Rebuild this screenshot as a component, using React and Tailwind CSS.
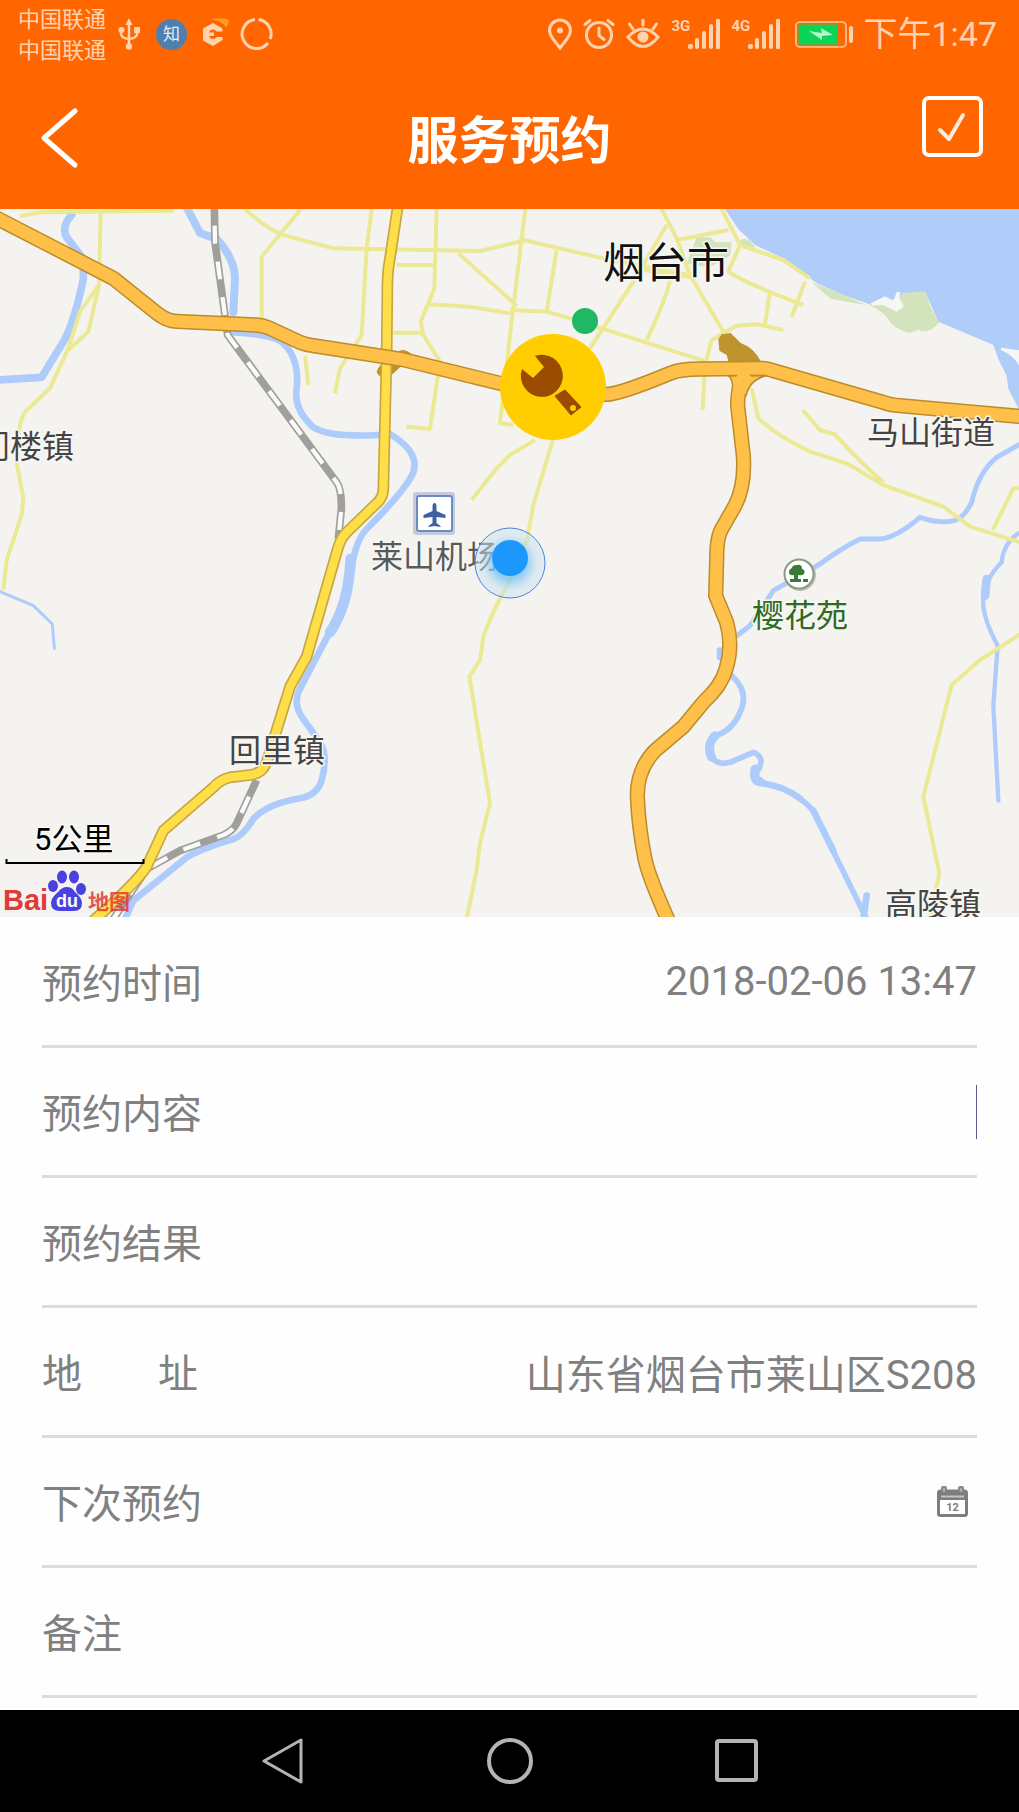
import React from "react";

const TINT = "#ffd2b0";

/* ---------- status bar ---------- */

function UsbIcon() {
  return (
    <svg width="26" height="32" viewBox="0 0 26 32" fill="none" stroke={TINT} strokeWidth="2.500" aria-hidden="true">
      <path d="M11 7v21M3 12v4q0 4 8 5M19 12v4q0 4-8 5" />
      <path d="M11 0l3.500 7h-7z" fill={TINT} stroke="none" />
      <circle cx="3.500" cy="12" r="3" fill={TINT} stroke="none" />
      <rect x="16" y="9" width="6" height="6" fill={TINT} stroke="none" />
      <circle cx="11" cy="28.500" r="3.200" fill={TINT} stroke="none" />
    </svg>
  );
}

function HexIcon() {
  return (
    <svg className="overflow-visible" width="29" height="32" viewBox="0 0 29 32" aria-hidden="true">
      <path d="M12 1q14-2 18 1.500q0 4-3 7q-3-6-15-8.500z" fill="#f9a01b" />
      <path d="M14 5l9.500 5.500v3h-6q-1-2-3.500-2q-3 0-4 3h5v3.500h-5q1 3 4 3q2.500 0 3.500-2h6v3L14 28l-10-5.500v-12z" fill={TINT} />
    </svg>
  );
}

function RingIcon() {
  return (
    <svg width="33" height="34" viewBox="0 0 33 34" fill="none" stroke={TINT} strokeWidth="3" aria-hidden="true">
      <path d="M18.500 2.600A14.500 14.500 0 0 1 30.200 22" />
      <path d="M28 26A14.500 14.500 0 1 1 15 2.600" />
    </svg>
  );
}

function PinIcon() {
  return (
    <svg width="26" height="32" viewBox="0 0 26 32" aria-hidden="true">
      <path d="M13 30C9 24 2.500 19 2.500 12.500a10.500 10.500 0 0 1 21 0C23.500 19 17 24 13 30z" fill="none" stroke={TINT} strokeWidth="3" />
      <circle cx="13" cy="12.500" r="3" fill={TINT} />
    </svg>
  );
}

function AlarmIcon() {
  return (
    <svg width="32" height="32" viewBox="0 0 32 32" fill="none" stroke={TINT} strokeWidth="3" strokeLinecap="round" aria-hidden="true">
      <circle cx="16" cy="17" r="12.500" />
      <path d="M16 10v7.500l5 4M2 6.500l5-4M30 6.500l-5-4" />
    </svg>
  );
}

function EyeIcon() {
  return (
    <svg width="36" height="32" viewBox="0 0 36 32" fill="none" stroke={TINT} strokeWidth="3" strokeLinecap="round" aria-hidden="true">
      <path d="M3 19Q18 3 33 19Q18 38 3 19z" />
      <circle cx="18" cy="19" r="5.500" fill={TINT} stroke="none" />
      <path d="M18 2v5M4.500 6l3.500 5M31.500 6l-3.500 5" />
    </svg>
  );
}

function Signal({ label }) {
  return (
    <div className="flex h-8 w-[50px] items-start">
      <span className="w-[17px] text-[15px] leading-4 font-bold">{label}</span>
      <svg width="33" height="32" viewBox="0 0 33 32" fill={TINT} aria-hidden="true">
        <rect x="0" y="26" width="5" height="5" rx="2" />
        <rect x="7" y="20" width="4" height="11" rx="2" />
        <rect x="14" y="13" width="4" height="18" rx="2" />
        <rect x="21" y="6" width="4" height="25" rx="2" />
        <rect x="28" y="1" width="4" height="30" rx="1" />
      </svg>
    </div>
  );
}

function BatteryIcon() {
  return (
    <svg width="62" height="32" viewBox="2 0 62 32" aria-hidden="true">
      <rect x="7" y="4" width="50" height="25" rx="4" fill="none" stroke="#ffb27d" strokeWidth="2" />
      <rect x="9.500" y="6.500" width="39" height="20" fill="#0ad556" />
      <path d="M20 13l13 2-1-5 12 7-11 1 0 4z" fill="#b6f5c9" />
      <rect x="60" y="8" width="4" height="17" rx="2" fill={TINT} />
    </svg>
  );
}

function StatusBar() {
  return (
    <div className="flex h-[68px] items-center justify-between pr-[22px] pl-[18px] text-[#ffd2b0]">
      <div className="flex items-center gap-3">
        <div className="pt-[2px] text-[22px] leading-[31px]">
          <p>中国联通</p>
          <p>中国联通</p>
        </div>
        <UsbIcon />
        <span className="flex size-[31px] items-center justify-center rounded-full bg-[#4f7fae] text-[17px] leading-none text-[#e4edf5]">知</span>
        <HexIcon />
        <RingIcon />
      </div>
      <div className="flex items-center gap-[10px]">
        <PinIcon />
        <AlarmIcon />
        <EyeIcon />
        <Signal label="3G" />
        <Signal label="4G" />
        <BatteryIcon />
        <time className="text-[34px] leading-none">下午1:47</time>
      </div>
    </div>
  );
}

function TitleBar() {
  return (
    <div className="grid h-[141px] grid-cols-[1fr_auto_1fr] items-center px-9">
      <button type="button" aria-label="返回" className="justify-self-start">
        <svg width="48" height="64" viewBox="0 0 48 64" fill="none" stroke="#fff" strokeWidth="5" strokeLinecap="round" strokeLinejoin="round" aria-hidden="true">
          <path d="M39 4L8 31L39 58" />
        </svg>
      </button>
      <h1 className="pt-1.5 text-[51px] leading-none font-bold">服务预约</h1>
      <button type="button" aria-label="提交" className="mt-7 self-start justify-self-end">
        <svg width="61" height="61" viewBox="0 0 61 61" fill="none" stroke="#fff" strokeLinecap="round" strokeLinejoin="round" aria-hidden="true">
          <rect x="2" y="2" width="57" height="57" rx="5" strokeWidth="4" />
          <path d="M18 34L27 43L41 19" strokeWidth="4" stroke="#ffeadb" />
        </svg>
      </button>
    </div>
  );
}

/* ---------- map ---------- */

const RIVERS = [
  ["M215 18Q185 50 198 82Q215 105 250 150L250 210Q225 330 195 390L125 505L-10 513", 23],
  ["M560 -5L600 72L650 90Q705 150 705 210L700 310", 24],
  ["M700 370Q800 375 840 395Q900 440 890 540Q880 600 940 655Q1000 690 1170 675Q1260 730 1240 790Q1220 840 1100 960Q1060 1000 1050 1120Q1045 1190 1000 1250Q930 1380 895 1450Q880 1490 910 1530L960 1600Q985 1640 965 1715Q950 1760 900 1768Q800 1785 760 1830Q730 1880 700 1890Q600 1920 560 1945L400 2075L375 2130", 20],
  ["M1052 1050Q1045 1190 990 1270", 32],
  ["M0 1148L100 1190L157 1245L163 1318", 9],
  ["M3060 705L2990 745Q2935 790 2915 880Q2890 930 2860 935Q2820 945 2760 925Q2690 985 2640 990L2580 990Q2520 1020 2460 1065L2320 1145L2250 1250L2205 1285", 15],
  ["M2160 1325L2160 1345", 20],
  ["M2195 1400Q2250 1450 2220 1510Q2200 1560 2150 1580Q2120 1610 2135 1645Q2155 1670 2190 1660L2260 1630Q2300 1645 2270 1690Q2260 1720 2340 1735Q2400 1760 2440 1805L2600 2130", 17],
  ["M2145 1580Q2118 1610 2135 1645M2265 1680Q2258 1715 2280 1718", 27],
  ["M2280 1722Q2350 1730 2400 1768M2440 1805L2500 1925M2600 2060L2590 2130", 20],
  ["M3060 970Q3010 1000 3005 1060Q2955 1110 2950 1170Q2945 1220 2993 1310L2980 1490L2995 1775", 13],
  ["M2960 1110L2955 1160", 26],
];

const MINOR_ROADS = [
  "M60 22L120 10L520 5",
  "M302 10L297 228L265 368L205 423",
  "M297 228L240 308L205 418L150 538L75 608Q50 650 50 760L70 868L65 918L20 1053L10 1143",
  "M735 0Q800 60 850 78L1000 118L1440 126L1550 100L1570 93L1810 148L2090 203",
  "M900 3L785 143V335",
  "M1115 0L1100 118L1085 378L1020 478L1005 553",
  "M1310 0L1303 238L1262 338L1270 378L1320 458L1290 660L1220 653",
  "M1190 168H1300M1180 371H1265",
  "M1285 286L1410 293L1530 313M1530 303L1640 308L1710 328L2120 458",
  "M1375 133L1550 290",
  "M915 440L925 528",
  "M1576 0L1565 88L1530 378L1500 643L1540 648",
  "M1605 693L1530 738L1490 778L1415 873",
  "M1670 123L1640 308",
  "M1985 0L2030 88L2070 198L2170 368",
  "M2000 48L1900 218L1770 418",
  "M2012 195Q2012 240 1940 393",
  "M2030 93L2185 63M1930 183L2085 206",
  "M2165 0L2220 108L2350 153L2430 208",
  "M2220 108L2185 188Q2240 225 2410 288",
  "M2415 218L2375 323M2310 243L2295 348",
  "M2350 363L2270 346L2210 350L2135 393L2115 468L2108 603",
  "M2255 538L2275 628Q2330 680 2430 728L2540 763L2650 828L2830 893L2910 953L3060 1000",
  "M2408 603L2460 663L2505 676Q2570 750 2650 820",
  "M3060 838H3040L2978 963",
  "M1660 688L1600 888L1580 998L1525 1123Q1480 1200 1450 1283L1440 1353L1408 1403L1470 1783L1440 1903L1430 1983L1400 2130",
  "M3060 1276L2940 1353L2855 1428L2770 1763L2818 1993L2790 2124",
];

const RAILWAY = "M643 -5L645 100L683 378L1010 820Q1025 840 1024 900L1015 990M770 1713L710 1843Q700 1865 670 1878L540 1925L440 1980L340 2130";
const YELLOW_ROAD = "M1193 -5L1165 180Q1162 210 1162 250L1160 430L1150 840Q1150 865 1130 883L1040 970Q1020 990 1010 1030L920 1343L870 1433L800 1660Q785 1695 750 1698L690 1705Q660 1712 640 1735L490 1865L440 1973Q410 2020 280 2135";
const HIGHWAY = "M-20 22L340 208L470 312Q500 336 530 337L770 348Q790 350 810 358L900 400Q920 408 940 410L1210 452L1500 523L1660 556H1820Q1860 555 2010 493Q2040 480 2100 480L2290 478Q2300 478 2330 488L2650 580Q2670 588 2700 590L3080 624";
const HIGHWAY_SOUTH = "M2240 490Q2213 520 2213 590L2230 740Q2236 830 2205 890L2165 960Q2150 985 2150 1053L2147 1160L2180 1240Q2200 1310 2178 1380Q2165 1430 2110 1480L2050 1553L1965 1625Q1912 1680 1912 1760Q1915 1850 1935 1950Q1945 2000 2005 2135";

function Place({ x, y, size = 32, fill = "#444", children }) {
  return (
    <text x={x} y={y} fontSize={size} fill={fill} stroke="#f8f7f4" strokeWidth="3" paintOrder="stroke" strokeLinejoin="round">
      {children}
    </text>
  );
}

function MapView() {
  return (
    <svg
      className="block h-[708px] w-full bg-[#f5f3f0]"
      viewBox="0 0 1019 708"
      preserveAspectRatio="xMidYMid slice"
      role="img"
      aria-label="烟台市地图"
    >
      <defs>
        <radialGradient id="halo">
          <stop offset="0.450" stopColor="#7cc4f7" stopOpacity="0.800" />
          <stop offset="0.800" stopColor="#c4e0f0" stopOpacity="0.500" />
          <stop offset="1" stopColor="#cfe4ef" stopOpacity="0.500" />
        </radialGradient>
      </defs>
      <g transform="scale(0.333333)" fill="none" strokeLinejoin="round">
        <path d="M2175 0L2215 60L2265 108L2350 148L2450 223L2530 258L2615 288L2775 248L2815 338L2980 408L2995 450L3020 500L3025 540L3057 600V0Z" fill="#b0cdfa" />
        <path d="M2612 283L2655 262L2680 275L2690 250L2700 248L2698 275L2710 295L2690 308L2650 290L2625 298ZM3003 416L3057 424V468Q3035 435 3003 424Z" fill="#f7f8f6" />
        <path d="M2705 252L2775 247L2790 290L2816 340Q2800 368 2765 367L2755 362L2730 372Q2680 362 2660 325Q2640 300 2610 290L2650 288L2690 308L2712 292L2700 270ZM2435 220L2530 258L2600 288Q2540 280 2490 268ZM2218 108Q2215 85 2245 92L2268 115ZM2090 85H2130L2145 100L2195 100L2190 140L2130 175L2060 165Z" fill="#d3e4bd" />
        <g stroke="#aeccfb" strokeLinecap="round">
          {RIVERS.map(([d, w]) => (
            <path key={d} d={d} strokeWidth={w} />
          ))}
        </g>
        <g stroke="#ebe994" strokeWidth="12">
          {MINOR_ROADS.map((d) => (
            <path key={d} d={d} />
          ))}
        </g>
        <path d="M1130 490Q1135 460 1180 455L1195 428Q1210 415 1235 435L1210 465Q1180 495 1165 505Q1140 510 1130 490ZM2155 390L2165 376L2192 372L2222 402Q2260 415 2282 456H2185L2180 438L2158 425Z" fill="#bf942f" />
        <path d={RAILWAY} stroke="#a09f9b" strokeWidth="23" />
        <path d={RAILWAY} stroke="#fafafa" strokeWidth="13" strokeDasharray="54 54" strokeDashoffset="-55" />
        <path d={YELLOW_ROAD} stroke="#c8a545" strokeWidth="35" />
        <path d={YELLOW_ROAD} stroke="#ffdf48" strokeWidth="25" />
        <path d={HIGHWAY_SOUTH} stroke="#bd8b2a" strokeWidth="46" />
        <path d="M2185 500Q2200 510 2198 550L2238 560Q2250 510 2300 500Z" fill="#ffc04a" stroke="#bd8b2a" strokeWidth="5" />
        <path d={HIGHWAY} stroke="#bd8b2a" strokeWidth="46" />
        <path d={HIGHWAY_SOUTH} stroke="#ffc04a" strokeWidth="37" />
        <path d={HIGHWAY} stroke="#ffc04a" strokeWidth="37" />
      </g>

      <Place x={603} y={69} size={42} fill="#111">烟台市</Place>
      <Place x={867} y={235}>马山街道</Place>
      <Place x={-22} y={249}>门楼镇</Place>
      <Place x={371} y={359} fill="#5a5a5a">莱山机场</Place>
      <Place x={752} y={418} fill="#2f6b22">樱花苑</Place>
      <Place x={229} y={553}>回里镇</Place>
      <Place x={885} y={707}>高陵镇</Place>

      {/* airport */}
      <rect x="413" y="283" width="42" height="43" rx="3" fill="#c3cbdc" />
      <rect x="417" y="287" width="35" height="35" rx="2" fill="#fff" stroke="#6c8bc0" strokeWidth="2" />
      <path d="M434.500 294q2 0 2 4v4l9 4v3l-9-1v6l4 3v1l-6-1-6 1v-1l4-3v-6l-9 1v-3l9-4v-4q0-4 2-4z" fill="#3c62a3" />

      {/* park */}
      <circle cx="800" cy="366" r="16" fill="#bdbdb6" />
      <circle cx="799" cy="365" r="14.500" fill="#fff" stroke="#8b9a83" strokeWidth="2" />
      <path d="M797 356q5-1 5 4 4 1 2 5-2 2-6 1v4h3v3h-11v-3h4v-4q-5 1-5-3 0-3 3-4 0-3 5-3zM803 370h5v3h-5z" fill="#397a35" />

      {/* current position */}
      <circle cx="510" cy="354" r="35" fill="url(#halo)" stroke="#4b83e0" strokeWidth="1" />
      <circle cx="510" cy="349" r="18" fill="#1c97fc" />

      {/* service markers */}
      <circle cx="585" cy="112" r="13" fill="#20b865" />
      <circle cx="553" cy="178" r="53" fill="#ffcd00" />
      <path d="M535 147A21 21 0 1 1 522 160L533 169L544 158Z" fill="#9a4b00" />
      <path d="M565 181L581 198L571 206L555 187Z" fill="#9a4b00" stroke="#9a4b00" strokeWidth="1" strokeLinejoin="round" />
      <circle cx="573" cy="199" r="3" fill="#ffcd00" />

      {/* scale */}
      <text x="34" y="641" fontSize="31" fill="#000" stroke="#fff" strokeWidth="2" paintOrder="stroke">5公里</text>
      <path d="M6.500 650v4h137v-4" fill="none" stroke="#000" strokeWidth="2" />

      {/* map provider mark */}
      <g className="font-['Liberation_Sans','Noto_Sans_CJK_SC',sans-serif]" fontWeight="700">
        <text x="3" y="701" fontSize="29" fill="#e03a3a">Bai</text>
        <g fill="#4a42e0">
          <ellipse cx="53" cy="677" rx="5" ry="6" />
          <ellipse cx="62" cy="668" rx="5" ry="6.500" />
          <ellipse cx="74" cy="668" rx="5" ry="6.500" />
          <ellipse cx="81" cy="680" rx="5" ry="6" />
          <path d="M67 678q5 0 8 5 7 6 7 11 0 8-8 8H60q-9 0-9-8 0-5 7-11 4-5 9-5z" />
        </g>
        <text x="67" y="698" fontSize="18" fill="#fff" textAnchor="middle">du</text>
        <text x="88" y="700" fontSize="21" fill="#e03a3a" fillOpacity="0.850">地图</text>
      </g>
    </svg>
  );
}

/* ---------- form ---------- */

function Row({ id, label, children }) {
  return (
    <div className="flex h-[130px] items-center gap-6 border-b-3 border-[#dcdcdc]">
      <label htmlFor={id} className="flex w-40 shrink-0 pt-1.5">{label}</label>
      {children}
    </div>
  );
}

function Field({ id, value = "" }) {
  return <input id={id} type="text" defaultValue={value} className="h-16 min-w-0 flex-1 bg-transparent text-right outline-none" />;
}

function CalendarIcon() {
  return (
    <svg width="31" height="31" viewBox="0 0 31 31" aria-hidden="true">
      <rect x="1.500" y="5" width="28" height="24.500" rx="2" fill="#fff" stroke="#7d7d7d" strokeWidth="3" />
      <path d="M1 5h29v9H1z" fill="#7d7d7d" />
      <path d="M4 10.500h23" stroke="#c4c4c4" strokeWidth="2" />
      <rect x="4" y="0" width="6" height="6" rx="2" fill="#8a8a8a" />
      <rect x="21" y="0" width="6" height="6" rx="2" fill="#8a8a8a" />
      <path d="M7 2v4M24 2v4" stroke="#d0d0d0" strokeWidth="1" />
      <text x="15.500" y="25" fontSize="11" fontWeight="700" textAnchor="middle" fill="#7d7d7d">12</text>
    </svg>
  );
}

function BookingForm() {
  return (
    <form className="px-[42px] pt-px pb-3 text-[40px] leading-none text-[#808080]">
      <Row id="time" label="预约时间">
        <Field id="time" value="2018-02-06 13:47" />
      </Row>
      <Row id="content" label="预约内容">
        <div className="flex flex-1 items-center">
          <Field id="content" />
          <span className="h-[54px] w-px bg-[#5a5a8c]" />
        </div>
      </Row>
      <Row id="result" label="预约结果">
        <Field id="result" />
      </Row>
      <Row
        id="address"
        label={
          <span className="flex w-[156px] justify-between">
            <span>地</span>
            <span>址</span>
          </span>
        }
      >
        <Field id="address" value="山东省烟台市莱山区S208" />
      </Row>
      <Row id="next" label="下次预约">
        <Field id="next" />
        <button type="button" aria-label="选择日期" className="mr-[9px]">
          <CalendarIcon />
        </button>
      </Row>
      <Row id="remark" label="备注">
        <Field id="remark" />
      </Row>
    </form>
  );
}

/* ---------- system navigation ---------- */

function NavButton({ label, children }) {
  return (
    <button type="button" aria-label={label}>
      <svg width="48" height="48" viewBox="0 0 48 48" fill="none" stroke="#b4b4b4" strokeWidth="4" strokeLinejoin="round" aria-hidden="true">
        {children}
      </svg>
    </button>
  );
}

function SystemNav() {
  return (
    <nav className="mt-auto flex h-[102px] items-center justify-center gap-[179px] bg-black">
      <NavButton label="后退">
        <path d="M5 24L42 3V45Z" strokeWidth="3" />
      </NavButton>
      <NavButton label="主屏幕">
        <circle cx="24" cy="24" r="21" />
      </NavButton>
      <NavButton label="最近任务">
        <rect x="4" y="4" width="39" height="39" rx="2" />
      </NavButton>
    </nav>
  );
}

export default function App() {
  return (
    <div className="flex min-h-screen flex-col bg-[#fefefe] font-[Roboto,'Noto_Sans_CJK_SC',sans-serif]">
      <header className="bg-[#ff6600] text-white">
        <StatusBar />
        <TitleBar />
      </header>
      <main>
        <MapView />
        <BookingForm />
      </main>
      <SystemNav />
    </div>
  );
}
